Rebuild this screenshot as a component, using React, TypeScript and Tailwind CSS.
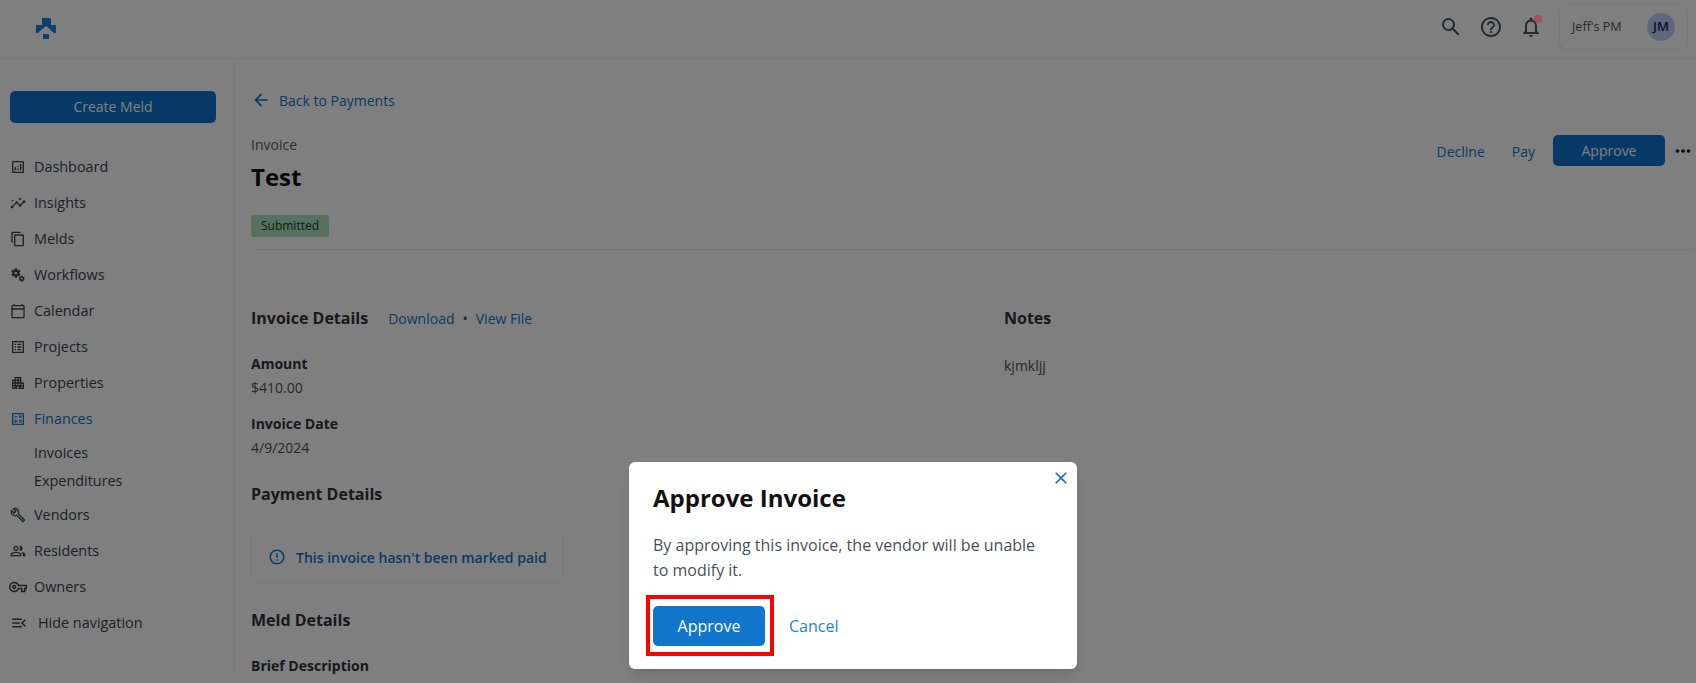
import {
  MdApartment,
  MdArrowBack,
  MdClose,
  MdContentCopy,
  MdErrorOutline,
  MdMoreHoriz,
  MdOutlineAnalytics,
  MdOutlineBuild,
  MdOutlineCalculate,
  MdOutlineCalendarToday,
  MdOutlineHelpOutline,
  MdOutlineInsights,
  MdOutlineListAlt,
  MdOutlineMenuOpen,
  MdOutlineMiscellaneousServices,
  MdOutlineNotifications,
  MdOutlinePeopleAlt,
  MdOutlineVpnKey,
  MdSearch,
} from 'react-icons/md';

const navTop = [
  { label: 'Dashboard', icon: MdOutlineAnalytics },
  { label: 'Insights', icon: MdOutlineInsights },
  { label: 'Melds', icon: MdContentCopy },
  { label: 'Workflows', icon: MdOutlineMiscellaneousServices },
  { label: 'Calendar', icon: MdOutlineCalendarToday },
  { label: 'Projects', icon: MdOutlineListAlt },
  { label: 'Properties', icon: MdApartment },
];

const navBottom = [
  { label: 'Vendors', icon: MdOutlineBuild },
  { label: 'Residents', icon: MdOutlinePeopleAlt },
];

function NavItem({ label, icon: Icon, active = false }: { label: string; icon: typeof MdSearch; active?: boolean }) {
  return (
    <div className={`flex h-9 items-center gap-2 pl-[10px] text-[14.4px] ${active ? 'text-[#1175cc]' : 'text-[#3b4252]'}`}>
      <Icon className="h-4 w-4 shrink-0" />
      <span>{label}</span>
    </div>
  );
}

function Sidebar() {
  return (
    <aside className="w-[235px] shrink-0 border-r border-[#f0f0f0] pt-[32px]">
      <div className="ml-[10px] flex h-8 w-[206px] items-center justify-center rounded-[5px] bg-[#0d73cc] pb-[2px] text-[14px] text-white">
        Create Meld
      </div>
      <nav className="mt-[26px]">
        {navTop.map((item) => (
          <NavItem key={item.label} {...item} />
        ))}
        <NavItem label="Finances" icon={MdOutlineCalculate} active />
        <div className="mt-[2px] flex h-[28px] items-center pl-[34px] text-[14.4px] text-[#3b4252]">Invoices</div>
        <div className="flex h-[28px] items-center pl-[34px] text-[14.4px] text-[#3b4252]">Expenditures</div>
        <div className="h-[2px]" />
        {navBottom.map((item) => (
          <NavItem key={item.label} {...item} />
        ))}
        <div className="flex h-9 items-center gap-[7px] pl-[9px] text-[14.4px] text-[#3b4252]">
          <MdOutlineVpnKey className="h-[18px] w-[18px] shrink-0" />
          <span>Owners</span>
        </div>
        <div className="flex h-9 items-center gap-[10px] pl-[10px] text-[14.4px] text-[#3b4252]">
          <MdOutlineMenuOpen className="h-[18px] w-[18px] shrink-0" />
          <span>Hide navigation</span>
        </div>
      </nav>
    </aside>
  );
}

function Header() {
  return (
    <header className="flex h-[59px] items-center border-b border-[#f0f0f0] pb-[4px] pr-[8px]">
      <svg className="ml-[36px] mt-[2px] h-[21px] w-5" viewBox="0 0 20 21" fill="#1a80d8">
        <path d="M6 0h9v7h5v8l-2 0-8-7-6 5-2 2H0V7h6z" />
        <rect x="7" y="16" width="6" height="5" />
      </svg>
      <div className="ml-auto flex items-center">
        <MdSearch className="h-[24px] w-[24px] text-[#4b5563]" />
        <MdOutlineHelpOutline className="ml-[16px] h-[24px] w-[24px] text-[#4b5563]" />
        <div className="relative ml-[16px]">
          <MdOutlineNotifications className="h-[24px] w-[24px] text-[#4b5563]" />
          <span className="absolute right-[1px] top-0 z-10 h-2 w-2 rounded-full bg-[#a85055]" />
        </div>
        <div className="ml-[16px] flex h-[46px] w-[129px] items-center justify-between rounded-lg border border-[#f0f0f0] px-[12px] text-[12.5px] text-[#4b4f57]">
          <span>Jeff's PM</span>
          <span className="flex h-7 w-7 items-center justify-center rounded-full bg-[#bcd0f4] text-[13px] font-semibold text-[#1a1a5e]">
            JM
          </span>
        </div>
      </div>
    </header>
  );
}

function Main() {
  return (
    <main className="min-w-0 flex-1 pl-[16px] pr-[2px] pt-[30px]">
      <div className="flex h-[22px] items-center gap-[8px] text-[14px] text-[#1175cc]">
        <MdArrowBack className="h-5 w-5" />
        <span>Back to Payments</span>
      </div>
      <div className="mt-[23px] flex items-start justify-between">
        <div>
          <div className="h-[22px] text-[14px] leading-[22px] text-[#5b5f66]">Invoice</div>
          <div className="mt-[4px] h-[34px] text-[24px] font-bold leading-[34px] text-[#111111]">Test</div>
          <div className="mt-[21px] flex h-[22px] w-[78px] items-center justify-center rounded-[3px] bg-[#aee3bd] text-[12px] text-[#0f3d22]">
            Submitted
          </div>
        </div>
        <div className="mt-[1px] flex items-center">
          <span className="mt-[2px] text-[14px] text-[#1175cc]">Decline</span>
          <span className="ml-[27px] mt-[2px] text-[14px] text-[#1175cc]">Pay</span>
          <div className="ml-[18px] flex h-[31px] w-[112px] items-center justify-center rounded-[5px] bg-[#0d73cc] text-[14px] text-white">
            Approve
          </div>
          <MdMoreHoriz className="ml-[7px] h-[22px] w-[22px] text-[#111111]" />
        </div>
      </div>
      <div className="mt-[12px] border-t border-[#eeeeee]" />

      <div className="mt-[56px] flex">
        <div className="w-[753px]">
          <div className="flex items-center">
            <span className="text-[16px] font-bold leading-[24px] text-[#2f3239]">Invoice Details</span>
            <span className="ml-[20px] text-[14px] text-[#1175cc]">Download</span>
            <span className="mx-[8px] text-[14px] text-[#3b4252]">•</span>
            <span className="text-[14px] text-[#1175cc]">View File</span>
          </div>
          <div className="mt-[22px] text-[14px] font-bold leading-[24px] text-[#2f3239]">Amount</div>
          <div className="text-[14px] leading-[24px] text-[#4b4f57]">$410.00</div>
          <div className="mt-[12px] text-[14px] font-bold leading-[24px] text-[#2f3239]">Invoice Date</div>
          <div className="text-[14px] leading-[24px] text-[#4b4f57]">4/9/2024</div>
          <div className="mt-[22px] text-[16px] font-bold leading-[24px] text-[#2f3239]">Payment Details</div>
          <div className="mt-[24px] flex h-[54px] w-[313px] items-center gap-[10px] rounded-[4px] border border-[#f7f7f7] pl-[16px] text-[14px] font-semibold text-[#1175cc]">
            <MdErrorOutline className="h-[18px] w-[18px] shrink-0" />
            <span>This invoice hasn't been marked paid</span>
          </div>
          <div className="mt-[24px] text-[16px] font-bold leading-[24px] text-[#2f3239]">Meld Details</div>
          <div className="mt-[22px] text-[14px] font-bold leading-[24px] text-[#2f3239]">Brief Description</div>
        </div>
        <div>
          <div className="text-[16px] font-bold leading-[24px] text-[#2f3239]">Notes</div>
          <div className="mt-[24px] text-[14px] leading-[24px] text-[#4b4f57]">kjmkljj</div>
        </div>
      </div>
    </main>
  );
}

function ApproveModal() {
  return (
    <div className="absolute left-[629px] top-[462px] h-[207px] w-[448px] rounded-[6px] bg-white pl-[24px] pt-[18px] shadow-lg">
      <MdClose className="absolute right-[6px] top-[6px] h-[20px] w-[20px] text-[#1175cc]" />
      <h2 className="text-[24px] font-bold leading-[36px] text-[#111111]">Approve Invoice</h2>
      <p className="mt-[17px] w-[400px] text-[16px] leading-[25px] text-[#4b4f57]">
        By approving this invoice, the vendor will be unable to modify it.
      </p>
      <div className="ml-[-7px] mt-[12px] flex items-center">
        <div className="border-[4px] border-[#ff0000] pb-[6px] pl-[3px] pr-[5px] pt-[7px]">
          <div className="flex h-10 w-[112px] items-center justify-center rounded-[5px] bg-[#1175cc] text-[16px] font-medium text-white">
            Approve
          </div>
        </div>
        <span className="ml-[15px] text-[16px] text-[#1f7fd6]">Cancel</span>
      </div>
    </div>
  );
}

export default function App() {
  return (
    <div className="relative h-[683px] overflow-hidden bg-white font-['Open_Sans',sans-serif]">
      <Header />
      <div className="flex">
        <Sidebar />
        <Main />
      </div>
      <div className="absolute inset-0 bg-black/50" />
      <ApproveModal />
    </div>
  );
}
